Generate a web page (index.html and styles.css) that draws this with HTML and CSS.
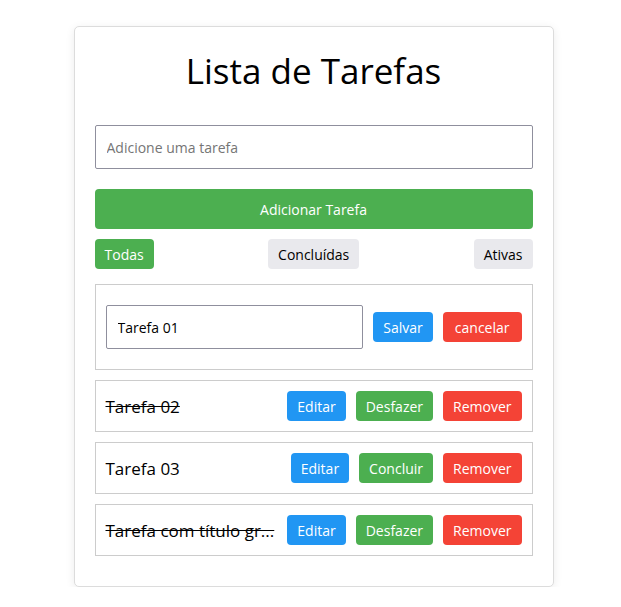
FILE: index.html
```html
<!DOCTYPE html>
<html lang="pt-BR">
<head>
<meta charset="utf-8">
<title>Lista de Tarefas</title>
<link rel="stylesheet" href="styles.css">
</head>
<body>
<main class="card">
  <h1 class="title">Lista de Tarefas</h1>
  <input class="new-input" type="text" placeholder="Adicione uma tarefa">
  <button class="btn btn-green add-btn">Adicionar Tarefa</button>
  <div class="filters">
    <button class="btn btn-green">Todas</button>
    <button class="btn btn-gray">Concluídas</button>
    <button class="btn btn-gray">Ativas</button>
  </div>
  <ul class="list">
    <li class="item item-edit">
      <input class="edit-input" type="text" value="Tarefa 01">
      <button class="btn btn-blue">Salvar</button>
      <button class="btn btn-red btn-cancel">cancelar</button>
    </li>
    <li class="item">
      <span class="task done">Tarefa 02</span>
      <button class="btn btn-blue">Editar</button>
      <button class="btn btn-green">Desfazer</button>
      <button class="btn btn-red">Remover</button>
    </li>
    <li class="item">
      <span class="task">Tarefa 03</span>
      <button class="btn btn-blue">Editar</button>
      <button class="btn btn-green">Concluir</button>
      <button class="btn btn-red">Remover</button>
    </li>
    <li class="item">
      <span class="task done">Tarefa com título gr...</span>
      <button class="btn btn-blue">Editar</button>
      <button class="btn btn-green">Desfazer</button>
      <button class="btn btn-red">Remover</button>
    </li>
  </ul>
</main>
</body>
</html>
```

FILE: styles.css
```css
* { box-sizing: border-box; }
html, body { margin: 0; padding: 0; background: #fff; }
body {
  font-family: "Open Sans", "DejaVu Sans", sans-serif;
  color: #000;
  padding: 26px 0 0 6px;
}
.card {
  width: 480px;
  margin: 0 auto;
  padding: 20px;
  border: 1px solid #dcdcdc;
  border-radius: 5px;
  box-shadow: 0 2px 10px rgba(0,0,0,0.08);
  background: #fff;
  display: flex;
  flex-direction: column;
}
.title {
  margin: 0 0 30px;
  font-size: 35px;
  font-weight: 400;
  line-height: 48px;
  text-align: center;
}
.new-input {
  height: 44px;
  border: 1px solid #8f8f9d;
  border-radius: 2px;
  padding: 0 11px;
  font: inherit;
  font-size: 14px;
  margin: 0 0 20px;
}
.new-input::placeholder { color: #757575; }
.btn {
  font: inherit;
  font-size: 14px;
  border: none;
  border-radius: 4px;
  height: 30px;
  padding: 0 10px;
  cursor: pointer;
  color: #fff;
  white-space: nowrap;
}
.btn-green { background: #4caf50; }
.btn-blue { background: #2196f3; }
.btn-red { background: #f44336; }
.btn-gray { background: #e9e9ed; color: #000; }
.btn-cancel { padding: 0 12px; }
.add-btn { height: 40px; width: 100%; margin-bottom: 10px; }
.filters {
  display: flex;
  justify-content: space-between;
  margin-bottom: 15px;
}
.list { list-style: none; margin: 0; padding: 0; }
.item {
  display: flex;
  align-items: center;
  gap: 10px;
  border: 1px solid #cccccc;
  padding: 10px;
  margin-bottom: 10px;
}
.item-edit { padding: 20px 10px; }
.edit-input {
  flex: 1;
  min-width: 0;
  height: 44px;
  border: 1px solid #8f8f9d;
  border-radius: 2px;
  padding: 0 11px;
  margin-right: 0;
  font: inherit;
  font-size: 14px;
}
.task {
  flex: 1 0 auto;
  font-size: 17px;
  white-space: nowrap;
}
.done { text-decoration: line-through; }
```
